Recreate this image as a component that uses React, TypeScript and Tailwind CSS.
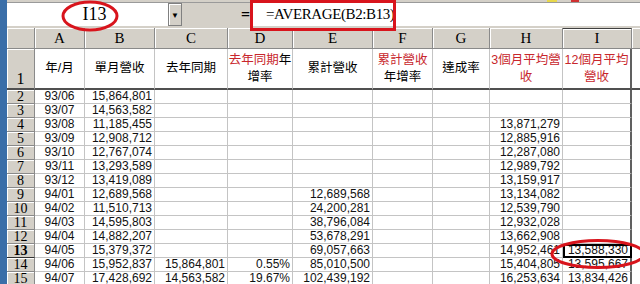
import React from "react";

const HEAD_FONT = "font-['Liberation_Serif','Times_New_Roman',serif]";
const CELL_FONT = "font-['Liberation_Sans',Arial,sans-serif]";
const CJK_FONT = "font-['Liberation_Sans','Noto_Sans_CJK_TC',sans-serif]";

const COLS = ["A", "B", "C", "D", "E", "F", "G", "H", "I"];

const ROWS: string[][] = [
  ["93/06", "15,864,801", "", "", "", "", "", "", ""],
  ["93/07", "14,563,582", "", "", "", "", "", "", ""],
  ["93/08", "11,185,455", "", "", "", "", "", "13,871,279", ""],
  ["93/09", "12,908,712", "", "", "", "", "", "12,885,916", ""],
  ["93/10", "12,767,074", "", "", "", "", "", "12,287,080", ""],
  ["93/11", "13,293,589", "", "", "", "", "", "12,989,792", ""],
  ["93/12", "13,419,089", "", "", "", "", "", "13,159,917", ""],
  ["94/01", "12,689,568", "", "", "12,689,568", "", "", "13,134,082", ""],
  ["94/02", "11,510,713", "", "", "24,200,281", "", "", "12,539,790", ""],
  ["94/03", "14,595,803", "", "", "38,796,084", "", "", "12,932,028", ""],
  ["94/04", "14,882,207", "", "", "53,678,291", "", "", "13,662,908", ""],
  ["94/05", "15,379,372", "", "", "69,057,663", "", "", "14,952,461", "13,588,330"],
  ["94/06", "15,952,837", "15,864,801", "0.55%", "85,010,500", "", "", "15,404,805", "13,595,667"],
  ["94/07", "17,428,692", "14,563,582", "19.67%", "102,439,192", "", "", "16,253,634", "13,834,426"],
];

const RED = "text-[#c8262c]";

const TITLES: React.ReactNode[] = [
  "年/月",
  "單月營收",
  "去年同期",
  <>
    <span className={RED}>去年同期</span>年
    <br />
    增率
  </>,
  "累計營收",
  <>
    <span className={RED}>累計營收</span>
    <br />
    年增率
  </>,
  "達成率",
  <span className={RED}>
    3個月平均營
    <br />
    收
  </span>,
  <span className={RED}>
    12個月平均
    <br />
    營收
  </span>,
];

const HEADER = "bg-[#d4d0c8] shadow-[inset_1px_1px_0_#fff] border-r border-b border-[#8a8a8a]";
const CELL = "border-r border-b border-[#c4c4c4] bg-white";

export default function App() {
  return (
    <div className="relative flex h-[284px] w-[640px] overflow-hidden bg-[#d4d0c8]">
      <div className="w-[7px] shrink-0 bg-[#3a6ea8]" />
      <div className="flex min-w-0 flex-1 flex-col">
        {/* toolbar remnant */}
        <div className="flex h-[4px] border-b border-[#9a9a9a]">
          <div className="w-[540px]" />
          <div className="h-[2px] w-[10px] bg-[#e8d84a]" />
          <div className="ml-[14px] h-[2px] w-[8px] bg-[#d03030]" />
        </div>

        {/* formula bar */}
        <div className="flex h-[25px] items-start pb-[2px]">
          <div className="flex h-[23px] w-[161px] items-center justify-center bg-white pl-[14px]">
            <span className={`${HEAD_FONT} text-[18px] text-black`}>I13</span>
          </div>
          <div className="flex h-[23px] w-[14px] items-center justify-center border border-[#808080] bg-[#d4d0c8] shadow-[inset_1px_1px_0_#fff]">
            <span className="text-[8px] leading-none text-black">▼</span>
          </div>
          <div className="flex h-[23px] w-[70px] items-center justify-end pr-[2px]">
            <span className={`${HEAD_FONT} text-[16px] font-bold text-black`}>=</span>
          </div>
          <div className="flex h-[23px] flex-1 items-center bg-white pl-[14px]">
            <span className={`${HEAD_FONT} text-[15px] tracking-[-0.4px] text-black`}>=AVERAGE(B2:B13)</span>
          </div>
        </div>

        {/* sheet */}
        <div className="grid grid-cols-[28px_50px_70px_73px_65px_80px_60px_57px_73px_69px_8px] grid-rows-[21px_41px_repeat(14,14px)]">
          <div className={HEADER} />
          {COLS.map((c) => (
            <div
              key={c}
              className={`${HEADER} flex items-center justify-center ${HEAD_FONT} text-[15px] text-black ${
                c === "I" ? "border-t border-t-[#404040]" : ""
              }`}
            >
              {c}
            </div>
          ))}
          <div className="bg-[#d4d0c8] shadow-[inset_1px_1px_0_#fff] border-b border-[#8a8a8a]" />

          <div className={`${HEADER} flex items-end justify-center pb-[1px] ${HEAD_FONT} text-[16px] leading-none text-black border-b-2 border-b-[#505050]`}>
            1
          </div>
          {TITLES.map((t, i) => (
            <div
              key={i}
              className={`${CELL} flex items-center justify-center whitespace-nowrap text-center ${CJK_FONT} text-[12.5px] leading-[17px] text-black border-b-2 border-b-[#505050] ${
                i === 8 ? "border-r-2 border-r-[#606060]" : ""
              }`}
            >
              <div>{t}</div>
            </div>
          ))}
          <div className="bg-white border-b-2 border-b-[#505050]" />

          {ROWS.map((row, r) => (
            <React.Fragment key={r}>
              <div
                className={`${HEADER} flex items-center justify-center ${HEAD_FONT} text-[14px] leading-[13px] text-black ${
                  r === 11 ? "font-bold border-b-[#303030]" : ""
                }`}
              >
                {r + 2}
              </div>
              {row.map((v, c) => (
                <div
                  key={c}
                  className={`${CELL} flex items-center ${
                    c === 0 ? "justify-center" : "justify-end pr-[2px]"
                  } ${CELL_FONT} text-[12px] leading-[13px] text-[#111] ${
                    c === 8 ? "border-r-2 border-r-[#606060]" : ""
                  } ${r === 11 && c === 8 ? "outline-2 -outline-offset-2 outline-black" : ""}`}
                >
                  {v}
                </div>
              ))}
              <div className="bg-white" />
            </React.Fragment>
          ))}
        </div>
      </div>

      {/* annotations */}
      <svg className="pointer-events-none absolute left-0 top-0" width="640" height="284">
        <ellipse cx="90" cy="16" rx="27" ry="14" fill="none" stroke="#d8141c" strokeWidth="3" />
        <rect x="251.5" y="1.5" width="143" height="28" fill="none" stroke="#d8141c" strokeWidth="3" />
        <ellipse cx="598" cy="254" rx="46" ry="13.5" fill="none" stroke="#d8141c" strokeWidth="3" />
      </svg>
    </div>
  );
}
